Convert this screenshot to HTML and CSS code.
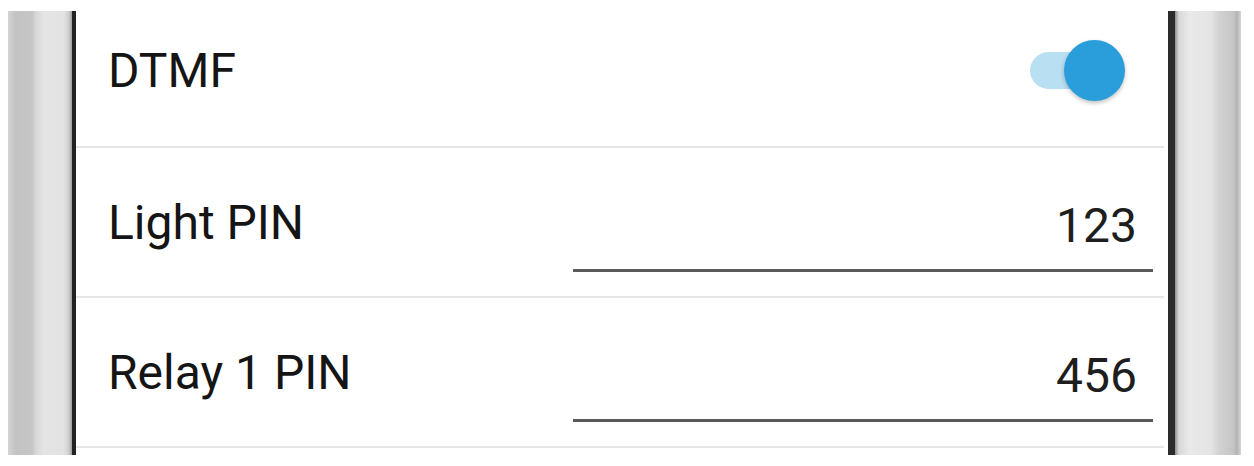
FILE: index.html
```html
<!DOCTYPE html>
<html lang="en">
<head>
  <meta charset="UTF-8">
  <title>DTMF Settings</title>
  <link rel="stylesheet" href="styles.css">
</head>
<body>

  <div class="phone">
    <div class="bezel bezel-left"></div>

    <div class="screen">
      <div class="row row-switch">
        <span class="label">DTMF</span>
        <div class="switch switch-on">
          <span class="switch-track"></span>
          <span class="switch-thumb"></span>
        </div>
      </div>

      <div class="row row-field">
        <span class="label">Light PIN</span>
        <div class="field">123</div>
      </div>

      <div class="row row-field">
        <span class="label">Relay 1 PIN</span>
        <div class="field">456</div>
      </div>
    </div>

    <div class="bezel bezel-right"></div>
  </div>

</body>
</html>
```

FILE: styles.css
```css
* {
  box-sizing: border-box;
}

body {
  margin: 0;
  background-color: #fff;
  font-family: Roboto, "Liberation Sans", sans-serif;
}

.phone {
  display: flex;
  width: 1233px;
  height: 444px;
  margin: 11px 0 0 8px;
}

.bezel {
  height: 100%;
}

.bezel-left {
  width: 64px;
  background: linear-gradient(to right, #d4d4d4 0, #c3c3c3 8px, #c6c6c6 24px, #d8d8d8 28px, #e4e4e4 36px, #e3e3e3 56px, #cdcdcd 61px, #9a9a9a 64px);
}

.bezel-right {
  width: 66px;
  background: linear-gradient(to right, #8e8e8e 0, #d8d8d8 4px, #e9e9e9 14px, #e4e4e4 36px, #d2d2d2 44px, #c6c6c6 58px, #b4b4b4 62px, #d6d6d6 66px);
}

.screen {
  flex: 1;
  background-color: #fff;
  border-left: 4px solid #222;
  border-right: 7px solid #2b2b2b;
  overflow: hidden;
}

.row {
  display: flex;
  justify-content: space-between;
  border-bottom: 2px solid #e6e6e6;
  padding-left: 32px;
  margin-right: 4px;
}

.label {
  font-size: 48px;
  color: #151515;
}

/* toggle row */
.row-switch {
  height: 137px;
  align-items: center;
  padding-bottom: 17px;
  padding-right: 39px;
}

.switch {
  position: relative;
  width: 95px;
  height: 61px;
}

.switch-track {
  position: absolute;
  left: 0;
  top: 12px;
  width: 70px;
  height: 37px;
  border-radius: 19px;
  background-color: #b9dff3;
}

.switch-thumb {
  position: absolute;
  right: 0;
  top: 0;
  width: 61px;
  height: 61px;
  border-radius: 50%;
  background-color: #2a9edb;
  box-shadow: 0 2px 4px rgba(0, 0, 0, 0.25);
}

/* PIN rows */
.row-field {
  height: 150px;
  align-items: center;
  padding-right: 11px;
}

.field {
  align-self: flex-end;
  width: 580px;
  margin-bottom: 24px;
  padding: 0 16px 15px 0;
  border-bottom: 3px solid #5a5a5a;
  text-align: right;
  font-size: 48px;
  line-height: 56px;
  color: #1e1e1e;
}
```
